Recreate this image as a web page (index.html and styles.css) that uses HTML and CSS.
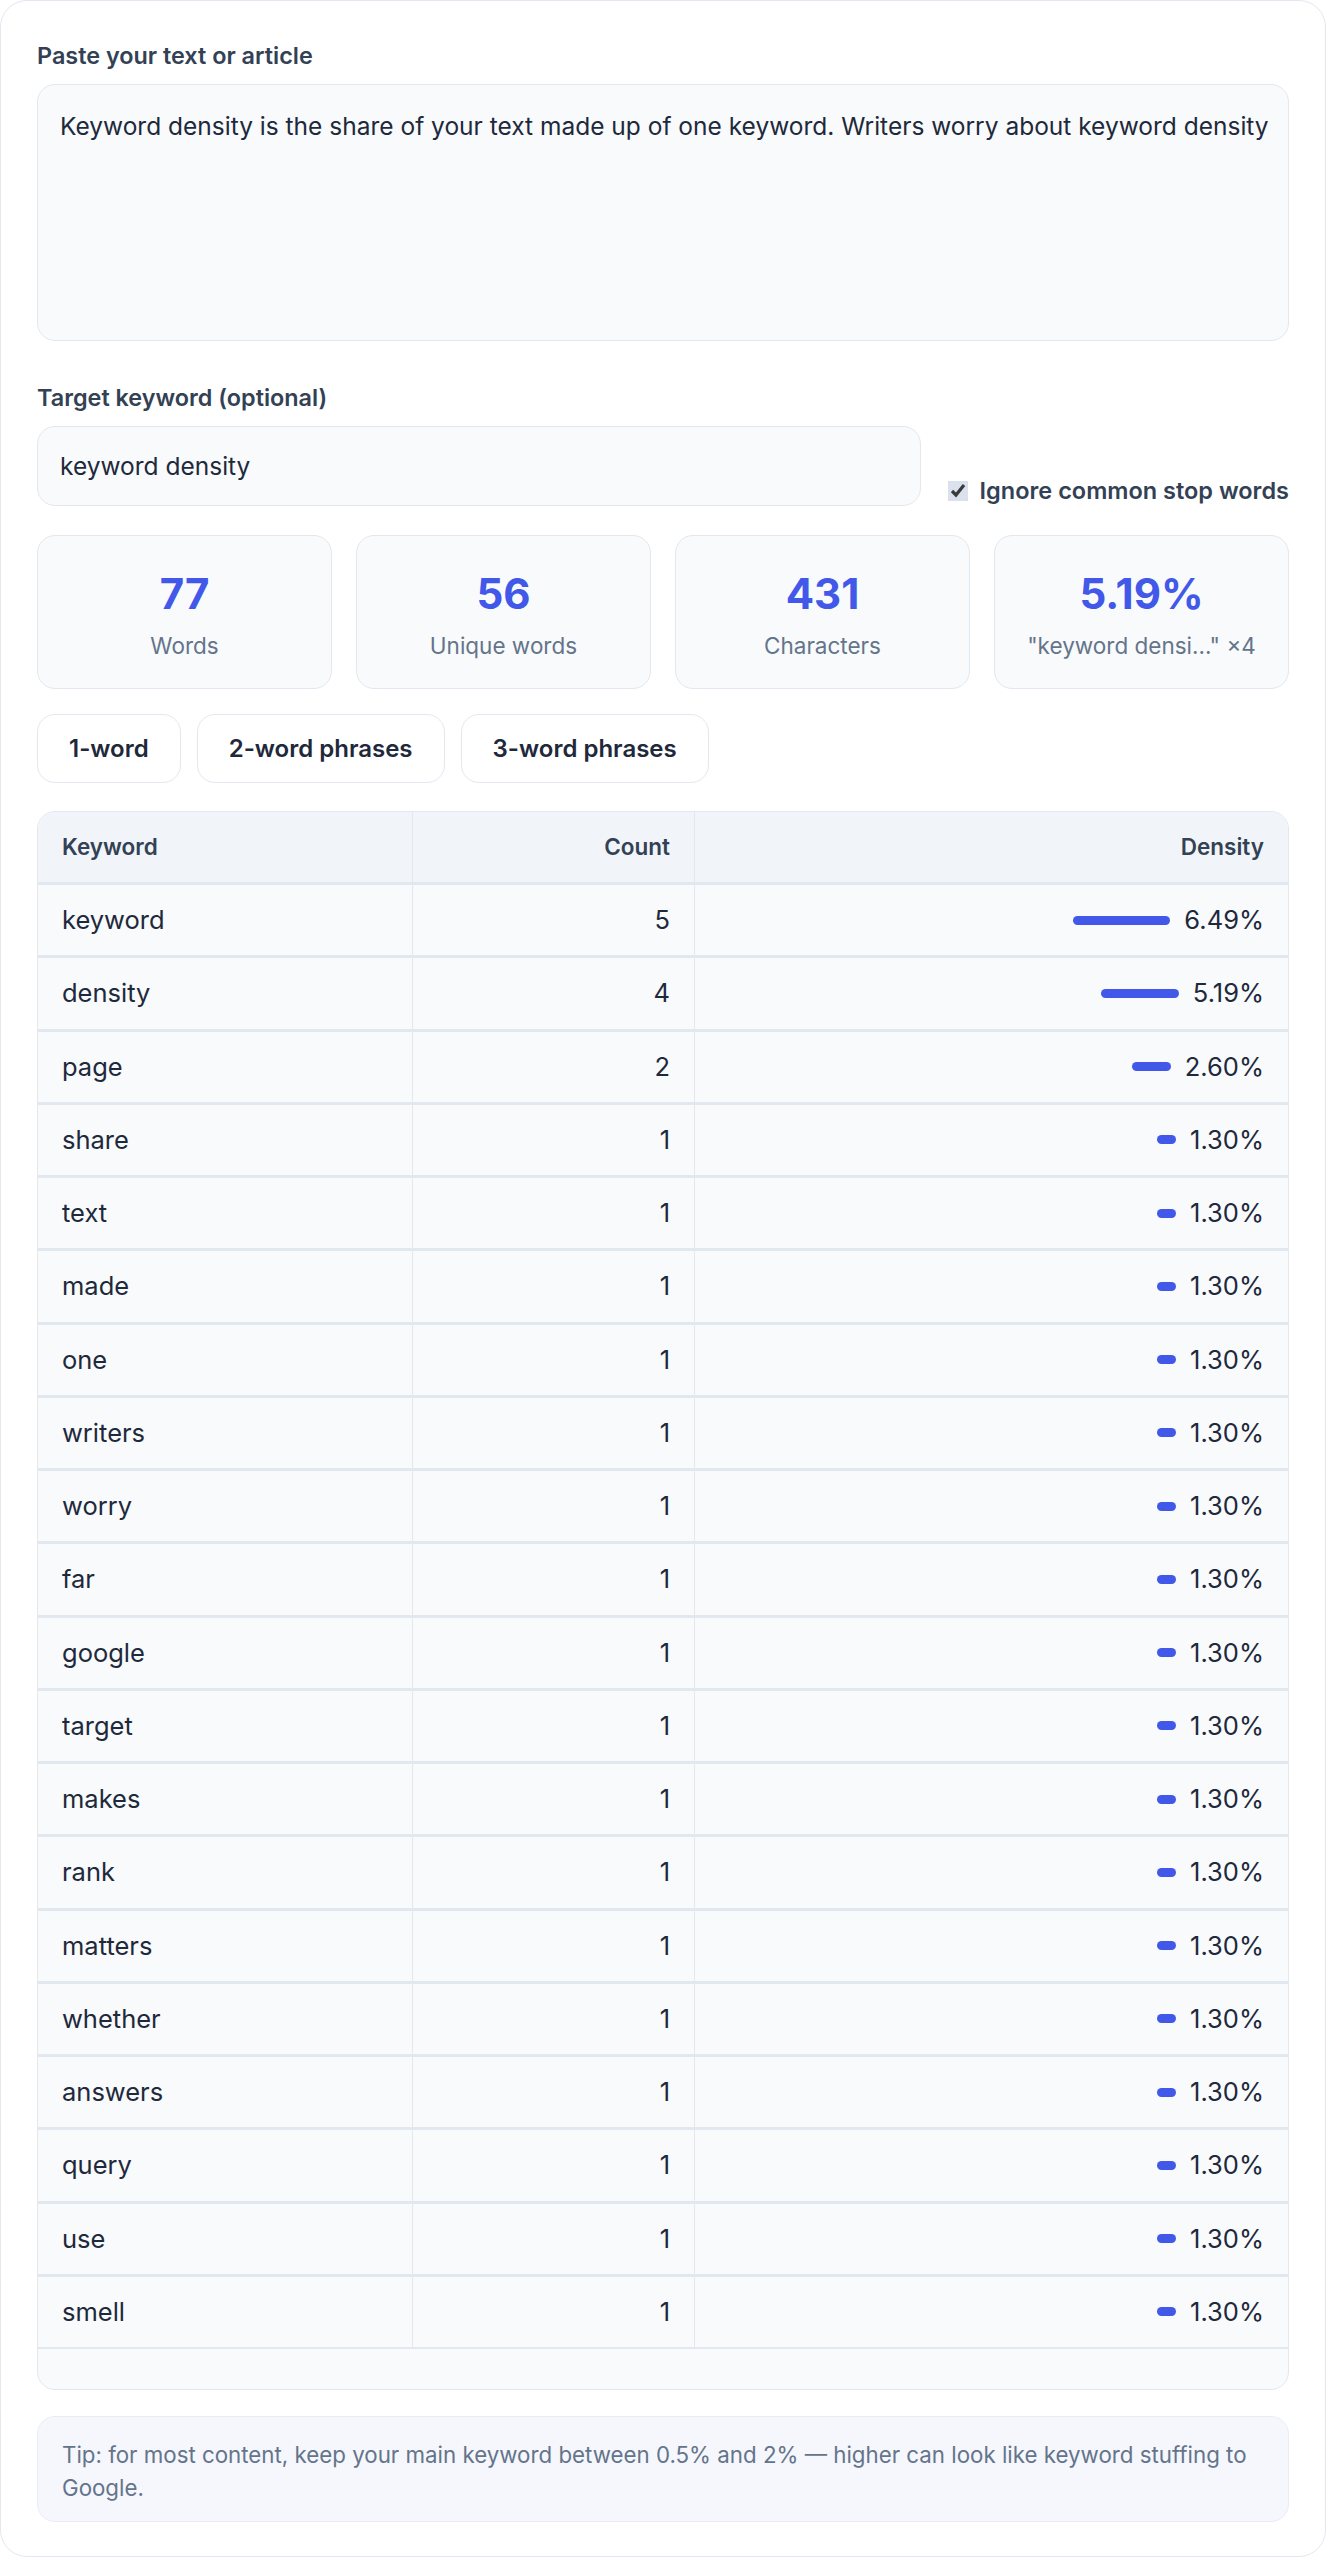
FILE: index.html
```html
<!DOCTYPE html>
<html lang="en">
<head>
<meta charset="utf-8">
<title>Keyword density checker</title>
<link rel="stylesheet" href="styles.css">
</head>
<body>
<div class="card">
  <label class="label" for="text">Paste your text or article</label>
  <textarea id="text" class="text-input" wrap="off" spellcheck="false">Keyword density is the share of your text made up of one keyword. Writers worry about keyword density</textarea>

  <div class="kw-row">
    <div class="kw-field">
      <label class="label" for="kw">Target keyword (optional)</label>
      <input id="kw" class="kw-input" type="text" value="keyword density" spellcheck="false">
    </div>
    <label class="stop"><input type="checkbox" class="stop-box" checked><span>Ignore common stop words</span></label>
  </div>

  <div class="stats">
    <div class="stat"><div class="stat-num">77</div><div class="stat-label">Words</div></div>
    <div class="stat"><div class="stat-num">56</div><div class="stat-label">Unique words</div></div>
    <div class="stat"><div class="stat-num">431</div><div class="stat-label">Characters</div></div>
    <div class="stat"><div class="stat-num">5.19%</div><div class="stat-label">"keyword densi..." ×4</div></div>
  </div>

  <div class="tabs">
    <button class="tab" type="button">1-word</button>
    <button class="tab" type="button">2-word phrases</button>
    <button class="tab" type="button">3-word phrases</button>
  </div>

  <div class="table-wrap">
    <table class="kw-table">
      <thead>
        <tr><th class="col-kw">Keyword</th><th class="col-count num">Count</th><th class="num">Density</th></tr>
      </thead>
      <tbody>
        <tr><td>keyword</td><td class="num">5</td><td><div class="dens"><span class="bar" style="width:97.4px"></span><span>6.49%</span></div></td></tr>
        <tr><td>density</td><td class="num">4</td><td><div class="dens"><span class="bar" style="width:77.9px"></span><span>5.19%</span></div></td></tr>
        <tr><td>page</td><td class="num">2</td><td><div class="dens"><span class="bar" style="width:39px"></span><span>2.60%</span></div></td></tr>
        <tr><td>share</td><td class="num">1</td><td><div class="dens"><span class="bar" style="width:19.5px"></span><span>1.30%</span></div></td></tr>
        <tr><td>text</td><td class="num">1</td><td><div class="dens"><span class="bar" style="width:19.5px"></span><span>1.30%</span></div></td></tr>
        <tr><td>made</td><td class="num">1</td><td><div class="dens"><span class="bar" style="width:19.5px"></span><span>1.30%</span></div></td></tr>
        <tr><td>one</td><td class="num">1</td><td><div class="dens"><span class="bar" style="width:19.5px"></span><span>1.30%</span></div></td></tr>
        <tr><td>writers</td><td class="num">1</td><td><div class="dens"><span class="bar" style="width:19.5px"></span><span>1.30%</span></div></td></tr>
        <tr><td>worry</td><td class="num">1</td><td><div class="dens"><span class="bar" style="width:19.5px"></span><span>1.30%</span></div></td></tr>
        <tr><td>far</td><td class="num">1</td><td><div class="dens"><span class="bar" style="width:19.5px"></span><span>1.30%</span></div></td></tr>
        <tr><td>google</td><td class="num">1</td><td><div class="dens"><span class="bar" style="width:19.5px"></span><span>1.30%</span></div></td></tr>
        <tr><td>target</td><td class="num">1</td><td><div class="dens"><span class="bar" style="width:19.5px"></span><span>1.30%</span></div></td></tr>
        <tr><td>makes</td><td class="num">1</td><td><div class="dens"><span class="bar" style="width:19.5px"></span><span>1.30%</span></div></td></tr>
        <tr><td>rank</td><td class="num">1</td><td><div class="dens"><span class="bar" style="width:19.5px"></span><span>1.30%</span></div></td></tr>
        <tr><td>matters</td><td class="num">1</td><td><div class="dens"><span class="bar" style="width:19.5px"></span><span>1.30%</span></div></td></tr>
        <tr><td>whether</td><td class="num">1</td><td><div class="dens"><span class="bar" style="width:19.5px"></span><span>1.30%</span></div></td></tr>
        <tr><td>answers</td><td class="num">1</td><td><div class="dens"><span class="bar" style="width:19.5px"></span><span>1.30%</span></div></td></tr>
        <tr><td>query</td><td class="num">1</td><td><div class="dens"><span class="bar" style="width:19.5px"></span><span>1.30%</span></div></td></tr>
        <tr><td>use</td><td class="num">1</td><td><div class="dens"><span class="bar" style="width:19.5px"></span><span>1.30%</span></div></td></tr>
        <tr class="last"><td>smell</td><td class="num">1</td><td><div class="dens"><span class="bar" style="width:19.5px"></span><span>1.30%</span></div></td></tr>
      </tbody>
    </table>
  </div>

  <p class="tip">Tip: for most content, keep your main keyword between 0.5% and 2% — higher can look like keyword stuffing to Google.</p>
</div>
</body>
</html>
```
FILE: styles.css
```css
* {
  box-sizing: border-box;
}

html, body {
  margin: 0;
  padding: 0;
  background: #ffffff;
}

body {
  font-family: Inter, "Noto Sans", "Liberation Sans", sans-serif;
  color: #1e293b;
}

.card {
  width: 1326px;
  background: #ffffff;
  border: 1px solid #e2e8f0;
  border-radius: 27px;
  padding: 38px 36px 34px;
}

.label {
  display: block;
  font-size: 23.4px;
  line-height: 33px;
  font-weight: 600;
  color: #334155;
  margin-bottom: 12px;
}

.text-input {
  display: block;
  width: 100%;
  height: 257px;
  margin: 0 0 40px;
  padding: 23px 22px;
  font-family: inherit;
  font-size: 24.5px;
  line-height: 36px;
  color: #1e293b;
  background: #f8fafc;
  border: 1px solid #e2e8f0;
  border-radius: 18px;
  resize: none;
  overflow: hidden;
  outline: none;
}

.kw-row {
  display: flex;
  align-items: flex-end;
  gap: 27px;
}

.kw-field {
  flex: 1;
  min-width: 0;
}

.kw-input {
  display: block;
  width: 100%;
  height: 80px;
  margin: 0;
  padding: 0 22px;
  font-family: inherit;
  font-size: 24.5px;
  color: #1e293b;
  background: #f8fafc;
  border: 1px solid #e2e8f0;
  border-radius: 18px;
  outline: none;
}

.stop {
  display: flex;
  align-items: center;
  gap: 12px;
  font-size: 23.5px;
  line-height: 30px;
  font-weight: 600;
  color: #334155;
  white-space: nowrap;
}

.stop-box {
  width: 20px;
  height: 20px;
  margin: 0;
  accent-color: #dbe2ee;
}

.stats {
  display: grid;
  grid-template-columns: repeat(4, 1fr);
  gap: 24px;
  margin-top: 29px;
}

.stat {
  background: #f8fafc;
  border: 1px solid #e2e8f0;
  border-radius: 18px;
  padding: 33px 16px 27px;
  text-align: center;
}

.stat-num {
  font-size: 42px;
  line-height: 50px;
  font-weight: 700;
  color: #4158e8;
}

.stat-label {
  margin-top: 12px;
  font-size: 22.5px;
  line-height: 30px;
  color: #64748b;
}

.tabs {
  display: flex;
  gap: 16px;
  margin-top: 25px;
}

.tab {
  height: 69px;
  padding: 0 31px;
  font-family: inherit;
  font-size: 24px;
  font-weight: 600;
  color: #1e293b;
  background: #ffffff;
  border: 1px solid #e2e8f0;
  border-radius: 18px;
}

.table-wrap {
  margin-top: 28px;
  background: #f8fafc;
  border: 1px solid #e2e8f0;
  border-radius: 18px;
  overflow: hidden;
  padding-bottom: 40px;
}

.kw-table {
  width: 100%;
  border-collapse: separate;
  border-spacing: 0;
}

.kw-table th {
  background: #f1f5f9;
  font-size: 22.5px;
  line-height: 34px;
  font-weight: 600;
  color: #334155;
  text-align: left;
  padding: 18px 24px;
  border-right: 1px solid #e2e8f0;
}

.kw-table th:last-child {
  border-right: none;
}

.kw-table .col-kw {
  width: 375px;
}

.kw-table .col-count {
  width: 282px;
}

.kw-table td {
  font-size: 25.5px;
  line-height: 34.25px;
  color: #1e293b;
  padding: 18px 24px;
  border-top: 3px solid #e2e8f0;
  border-right: 1px solid #e2e8f0;
}

.kw-table td:last-child {
  border-right: none;
}

.kw-table tr.last td {
  border-bottom: 2px solid #e2e8f0;
}

.kw-table .num {
  text-align: right;
}

.dens {
  display: flex;
  justify-content: flex-end;
  align-items: center;
  gap: 14px;
}

.bar {
  display: block;
  height: 9px;
  border-radius: 5px;
  background: #4158e8;
}

.tip {
  margin: 26px 0 0;
  background: #f5f7fc;
  border: 1px solid #e8edf5;
  border-radius: 18px;
  padding: 21px 10px 17px 24px;
  font-size: 22.3px;
  line-height: 33px;
  color: #64748b;
}
```
